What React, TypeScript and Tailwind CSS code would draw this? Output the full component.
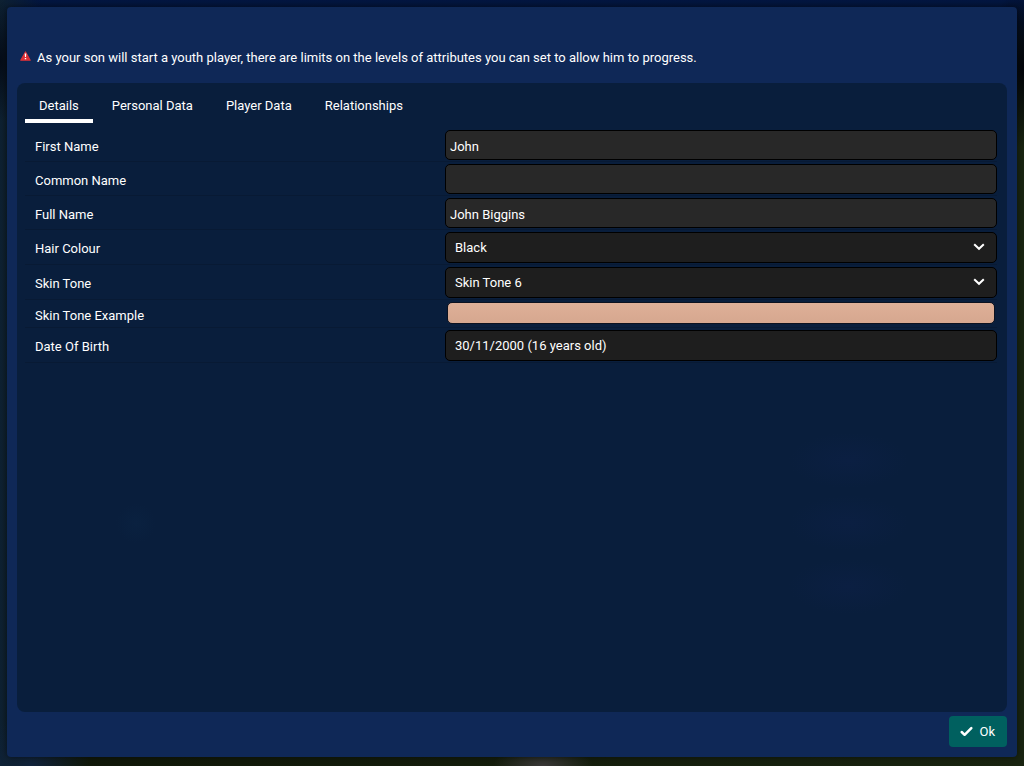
import { useState } from "react";
import type { ReactNode } from "react";

const TABS = ["Details", "Personal Data", "Player Data", "Relationships"];
const HAIR_COLOURS = ["Black", "Brown", "Blond", "Red"];
const SKIN_TONES = ["Skin Tone 5", "Skin Tone 6", "Skin Tone 7"];

const FIELD =
  "block w-full rounded-[5px] border border-black text-[13px] leading-5 text-white outline-none focus-visible:ring-1 focus-visible:ring-sky-400";

function Row({ label, htmlFor, children }: { label: string; htmlFor?: string; children: ReactNode }) {
  return (
    <div className="grid grid-cols-[35fr_46fr] items-center border-b border-[#081a34] pt-[2px] pb-px">
      {htmlFor ? (
        <label htmlFor={htmlFor} className="pl-[10px] pt-[3px]">
          {label}
        </label>
      ) : (
        <span className="pl-[10px] pt-[3px]">{label}</span>
      )}
      {children}
    </div>
  );
}

function TextRow({ id, label, initial }: { id: string; label: string; initial: string }) {
  const [value, setValue] = useState(initial);
  return (
    <Row label={label} htmlFor={id}>
      <input
        id={id}
        type="text"
        value={value}
        onChange={(e) => setValue(e.target.value)}
        className={`${FIELD} h-[30px] bg-[#282828] px-1 pt-[2px]`}
      />
    </Row>
  );
}

function SelectRow({ id, label, initial, options }: { id: string; label: string; initial: string; options: string[] }) {
  const [value, setValue] = useState(initial);
  return (
    <Row label={label} htmlFor={id}>
      <div className="relative">
        <select
          id={id}
          value={value}
          onChange={(e) => setValue(e.target.value)}
          className={`${FIELD} h-[31px] appearance-none bg-[#1e1e1e] pr-8 pl-[9px]`}
        >
          {options.map((o) => (
            <option key={o}>{o}</option>
          ))}
        </select>
        <svg
          aria-hidden="true"
          viewBox="0 0 12 8"
          className="pointer-events-none absolute top-[11px] right-[12px] h-2 w-3 fill-none stroke-white stroke-2"
        >
          <path d="M1.2 1.2 6 5.8l4.800-4.600" />
        </svg>
      </div>
    </Row>
  );
}

export default function App() {
  const [tab, setTab] = useState("Details");
  return (
    <div className="flex min-h-screen flex-col bg-[#10180f] bg-[radial-gradient(ellipse_50px_20px_at_53%_100%,#3a3838,transparent),radial-gradient(ellipse_60px_50px_at_3%_100%,#10233c,transparent),radial-gradient(ellipse_40px_60px_at_0%_8%,#050c18,transparent),radial-gradient(ellipse_40px_80px_at_100%_9%,#02040a,transparent),linear-gradient(90deg,#0e2132_0%,transparent_4%),linear-gradient(180deg,#031641_0%,#04132f_3%,transparent_10%),linear-gradient(90deg,#101708,#192410)] px-[7px] pt-[7px] pb-[9px] font-['Roboto','Liberation_Sans',sans-serif] text-[13px] leading-5 text-white">
      <main className="flex flex-1 flex-col rounded-[4px] bg-[#0f2857] px-[10px] pb-[10px] shadow-[0_0_6px_rgba(0,0,0,0.5)]">
        <div className="flex h-[76px] items-center gap-[6px] pt-[26px] pl-[3px]">
          <svg aria-hidden="true" viewBox="0 0 11 10" className="mb-1 h-[10px] w-[11px] shrink-0">
            <path d="M5.500 1 10.200 9.200H.8Z" fill="#dc3138" stroke="#dc3138" strokeWidth="1.200" strokeLinejoin="round" />
            <path d="M4.700 2.500h1.600L6 6h-1zM4.800 6.900h1.400v1.400H4.800z" fill="#fff" />
          </svg>
          <p>
            As your son will start a youth player, there are limits on the levels of attributes you can set to allow him
            to progress.
          </p>
        </div>
        <section className="flex-1 rounded-lg bg-[#091e3c] bg-[radial-gradient(ellipse_60px_28px_at_84%_60%,#0b1f42,transparent),radial-gradient(ellipse_60px_28px_at_84%_70%,#0b1f42,transparent),radial-gradient(ellipse_60px_28px_at_84%_80%,#0b1f42,transparent),radial-gradient(circle_20px_at_12%_70%,#0a2140,transparent)] pr-[10px] pl-2">
          <div role="tablist" className="flex gap-[5px]">
            {TABS.map((t) => (
              <button
                key={t}
                type="button"
                role="tab"
                aria-selected={t === tab}
                onClick={() => setTab(t)}
                className={`h-10 border-b-4 px-[14px] pt-[9px] ${t === tab ? "border-white" : "border-transparent"}`}
              >
                {t}
              </button>
            ))}
          </div>
          <form className="pt-[5px]" onSubmit={(e) => e.preventDefault()}>
            <TextRow id="first-name" label="First Name" initial="John" />
            <TextRow id="common-name" label="Common Name" initial="" />
            <TextRow id="full-name" label="Full Name" initial="John Biggins" />
            <SelectRow id="hair-colour" label="Hair Colour" initial="Black" options={HAIR_COLOURS} />
            <SelectRow id="skin-tone" label="Skin Tone" initial="Skin Tone 6" options={SKIN_TONES} />
            <Row label="Skin Tone Example">
              <div className="mx-[2px] mb-[2px] h-[22px] rounded-[5px] border border-[#0c1220] bg-linear-to-b from-[#deb098] to-[#d6a78f]" />
            </Row>
            <Row label="Date Of Birth" htmlFor="date-of-birth">
              <button
                id="date-of-birth"
                type="button"
                className={`${FIELD} h-[31px] bg-[#1e1e1e] px-[9px] text-left`}
              >
                30/11/2000 (16 years old)
              </button>
            </Row>
          </form>
        </section>
        <div className="flex justify-end pt-1">
          <button type="button" className="flex h-[31px] items-center gap-[6px] rounded-[4px] bg-[#00605f] pr-3 pl-[11px]">
            <svg
              aria-hidden="true"
              viewBox="0 0 13 11"
              className="h-[11px] w-[13px] fill-none stroke-white stroke-[2.500]"
              strokeLinecap="round"
              strokeLinejoin="round"
            >
              <path d="M1.700 6 4.600 8.800 11.300 2.100" />
            </svg>
            Ok
          </button>
        </div>
      </main>
    </div>
  );
}
